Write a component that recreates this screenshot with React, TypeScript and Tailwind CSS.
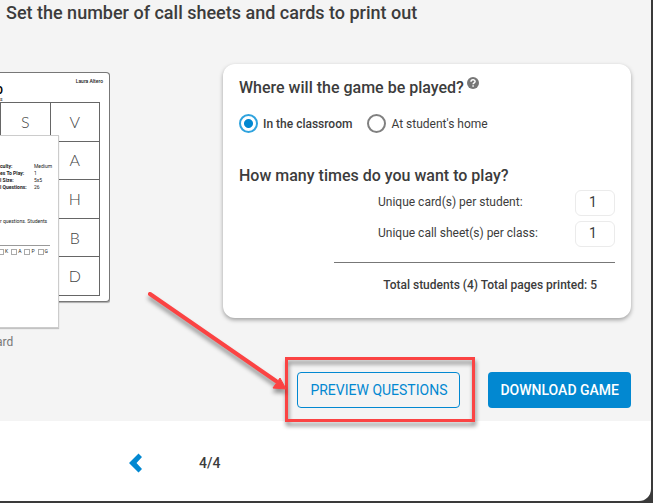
import { ReactNode, useState } from "react";

const cardRows = [
  ["S", "V"],
  ["", "A"],
  ["", "H"],
  ["", "B"],
  ["", "D"],
];

const sheetInfo = [
  ["culty:", "Medium"],
  ["es To Play:", "1"],
  ["l Size:", "5x5"],
  ["l Questions:", "26"],
];

const GamePreview: React.FC = () => (
  <div className="w-[110px] shrink-0 overflow-hidden pt-2 text-[#222]">
    <div className="relative h-[230px] rounded-r-sm border border-l-0 border-[#777] bg-white pt-1 shadow-[1px_1px_1px_rgba(0,0,0,0.3)]">
      <div className="pr-1.5 text-right text-[5px] leading-2 font-medium">
        Laura Altero
      </div>
      <div className="flex h-[10px] items-center text-[10px] font-bold text-black">
        <span className="-ml-1">O</span>
      </div>
      <div className="h-[7px] text-[5px] leading-2">s</div>
      <table className="h-[194px] w-[100px] table-fixed border-collapse text-center font-[Lato] text-base font-light text-[#444]">
        <tbody>
          {cardRows.map((row, i) => (
            <tr key={i}>
              {row.map((letter, j) => (
                <td key={j} className="border border-[#666] p-0 leading-5">
                  {letter}
                </td>
              ))}
            </tr>
          ))}
        </tbody>
      </table>
      <div className="absolute top-[62px] left-0 h-[193px] w-[59px] border border-l-0 border-[#ccc] bg-white pt-[27px] text-[5px] shadow-[0_1px_1px_rgba(0,0,0,0.2)]">
        <table className="w-full">
          <tbody>
            {sheetInfo.map(([label, value]) => (
              <tr key={label} className="h-[7px] leading-[7px]">
                <th className="w-[34px] p-0 text-left font-bold whitespace-nowrap">
                  {label}
                </th>
                <td className="p-0">{value}</td>
              </tr>
            ))}
          </tbody>
        </table>
        <p className="mt-[27px] leading-[7px] whitespace-nowrap">
          r questions. Students
        </p>
        <div className="mt-5 mr-2 border-t border-[#999]" />
        <div className="-ml-0.5 flex gap-[3px] pt-0.5 leading-[7px]">
          {["K", "A", "P", "G"].map((name) => (
            <span key={name} className="flex items-center gap-px">
              <span className="h-[6px] w-[6px] border border-[#aaa]" />
              {name}
            </span>
          ))}
        </div>
      </div>
    </div>
    <div className="mt-8 -ml-1 text-xs leading-4 text-[#777]">ard</div>
  </div>
);

const PlaceRadio: React.FC<{
  value: string;
  label: string;
  selected: string;
  onSelect: (value: string) => void;
}> = ({ value, label, selected, onSelect }) => (
  <label
    className={`flex items-center gap-[5px] text-xs ${
      selected === value ? "font-medium" : ""
    }`}
  >
    <input
      type="radio"
      name="place"
      value={value}
      checked={selected === value}
      onChange={() => onSelect(value)}
      className="h-[19px] w-[19px] appearance-none rounded-full border-2 border-[#808080] bg-white checked:border-[#2fa3de] checked:bg-[radial-gradient(circle,#0288d1_4px,#fff_5px)]"
    />
    {label}
  </label>
);

const CountField: React.FC<{ id: string; label: string }> = ({ id, label }) => {
  const [count, setCount] = useState("1");

  return (
    <div className="flex items-center justify-between">
      <label htmlFor={id} className="pb-0.5 text-xs">
        {label}
      </label>
      <input
        id={id}
        value={count}
        onChange={(e) => setCount(e.target.value)}
        className="h-[26px] w-10 rounded-md border border-[#ebebeb] bg-white pr-1 pb-0.5 text-center text-sm"
      />
    </div>
  );
};

const Highlight: React.FC<{ children: ReactNode }> = ({ children }) => (
  <div className="relative">
    {children}
    <div className="pointer-events-none absolute -top-[15px] -right-[15px] -bottom-[14px] -left-3 z-10 border-3 border-[#fb4343] drop-shadow-[1px_4px_2px_rgba(0,0,0,0.45)]" />
    <svg
      width="150"
      height="120"
      viewBox="0 0 150 120"
      className="pointer-events-none absolute -top-[88px] -left-[158px] z-10 drop-shadow-[0_4px_2px_rgba(0,0,0,0.4)]"
    >
      <path
        d="M11 10 L137 97"
        stroke="#fb4343"
        strokeWidth="4"
        strokeLinecap="round"
      />
      <path d="M147 105 L141 94 L134 104 Z" fill="#fb4343" stroke="#fb4343" />
    </svg>
  </div>
);

const App: React.FC = () => {
  const [place, setPlace] = useState("classroom");

  return (
    <div className="min-h-screen bg-[#3a3a3a] pr-0.5 pb-0.5 font-[Roboto,sans-serif] text-[#3c3c3c]">
      <main className="flex min-h-[calc(100vh-2px)] flex-col overflow-hidden rounded-br-xl bg-white">
        <section className="bg-[#f4f4f4] pr-5 pb-[13px]">
          <h1 className="pt-px pl-1.5 text-lg leading-6 font-medium">
            Set the number of call sheets and cards to print out
          </h1>

          <div className="mt-[39px] flex items-start justify-between">
            <GamePreview />
            <form className="w-[408px] rounded-xl bg-white px-4 pt-3 pb-[25px] shadow-[0_2px_4px_rgba(0,0,0,0.35)]">
              <h2 className="flex gap-[3px] text-base leading-6 font-medium">
                Where will the game be played?
                <svg width="12" height="12" viewBox="0 0 12 12" className="mt-px">
                  <circle cx="6" cy="6" r="6" fill="#777" />
                  <path
                    d="M4 4.8 C4 2.2 8.1 2.3 8.1 4.5 C8.1 5.8 6.1 5.9 6.1 7.2 M6.1 8.3 V9.7"
                    fill="none"
                    stroke="#fff"
                    strokeWidth="1.5"
                  />
                </svg>
              </h2>
              <div className="mt-3.5 flex gap-[15px]">
                <PlaceRadio
                  value="classroom"
                  label="In the classroom"
                  selected={place}
                  onSelect={setPlace}
                />
                <PlaceRadio
                  value="home"
                  label="At student's home"
                  selected={place}
                  onSelect={setPlace}
                />
              </div>

              <h2 className="mt-[31px] text-base leading-6 font-medium">
                How many times do you want to play?
              </h2>
              <div className="ml-auto w-[281px]">
                <div className="flex flex-col gap-[5px] pt-0.5 pl-11">
                  <CountField id="cards" label="Unique card(s) per student:" />
                  <CountField id="sheets" label="Unique call sheet(s) per class:" />
                </div>
                <hr className="mt-[15px] border-[#777]" />
                <p className="mt-3.5 pr-[18px] text-right text-xs leading-4 font-medium">
                  Total students (4) Total pages printed: 5
                </p>
              </div>
            </form>
          </div>

          <div className="mt-[22px] flex justify-end gap-7">
            <Highlight>
              <button className="h-9 rounded border border-[#0288d1] px-3 text-sm text-[#0288d1]">
                PREVIEW QUESTIONS
              </button>
            </Highlight>
            <button className="h-9 rounded bg-[#0288d1] px-3 text-sm font-medium text-white">
              DOWNLOAD GAME
            </button>
          </div>
        </section>

        <footer className="flex items-center gap-14 pt-8 pb-6 pl-[129px]">
          <button aria-label="Previous step">
            <svg width="14" height="20" viewBox="0 0 14 20" fill="#0288d1">
              <path d="M9.5 0.5 L13 4 L7.5 10 L13 16 L9.5 19.5 L0 10 Z" />
            </svg>
          </button>
          <span className="text-sm font-medium">4/4</span>
        </footer>
      </main>
    </div>
  );
};
export default App;
